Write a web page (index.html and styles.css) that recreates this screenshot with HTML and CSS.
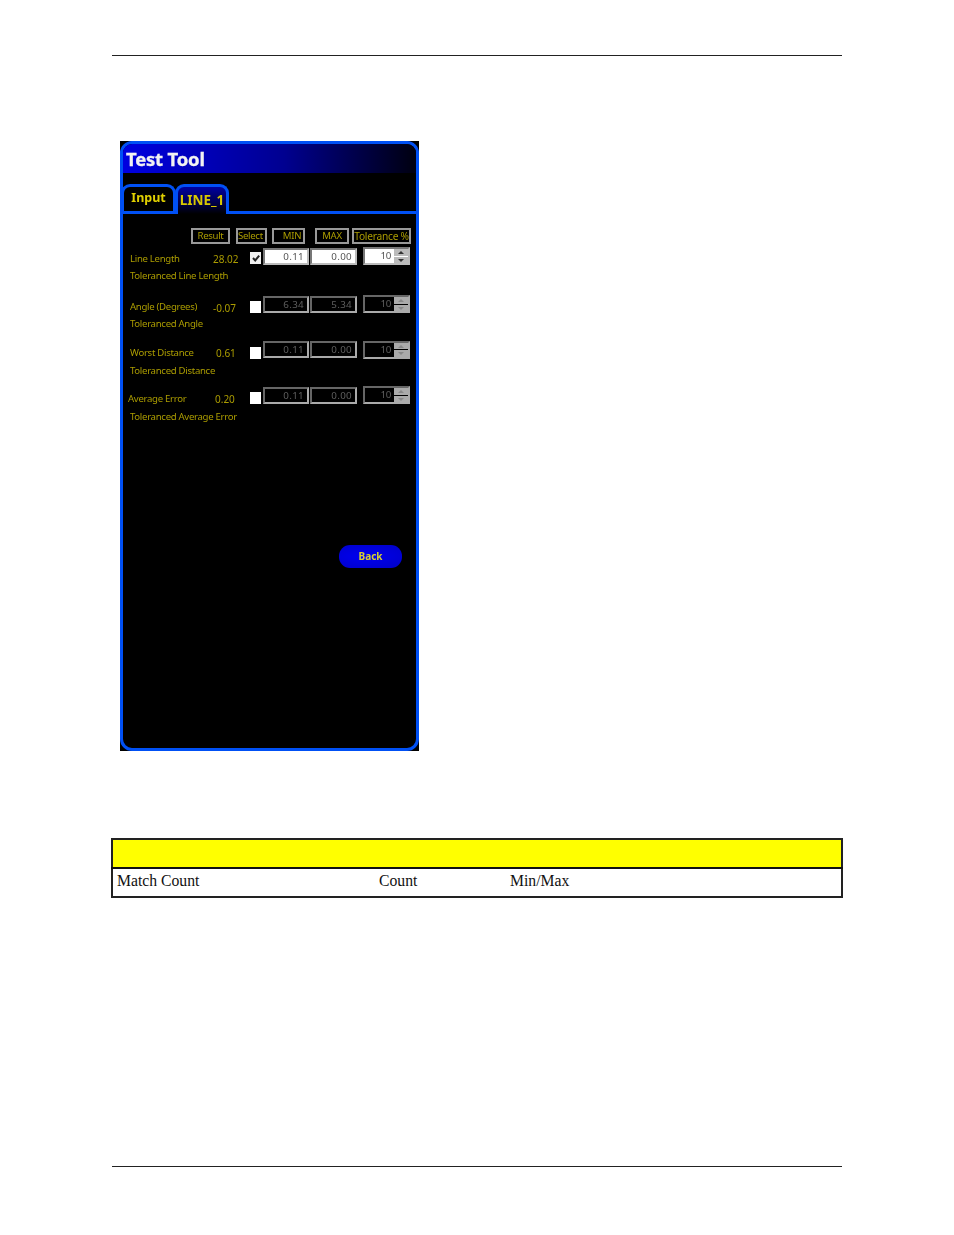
FILE: index.html
```html
<!DOCTYPE html>
<html lang="en">
<head>
<meta charset="utf-8">
<title>Test Tool</title>
<link rel="stylesheet" href="styles.css">
</head>
<body>
<div class="page">
  <hr class="rule">
  <div class="shot">
    <div class="window">
      <div class="titlebar">Test Tool</div>
      <div class="tabs">
        <div class="tab tab-input">Input</div>
        <div class="tab tab-active">LINE_1</div>
      </div>
      <div class="panel">
        <div class="heads">
          <span class="hd hd-result">Result</span>
          <span class="hd hd-select">Select</span>
          <span class="hd hd-min">MIN</span>
          <span class="hd hd-max">MAX</span>
          <span class="hd hd-tol">Tolerance %</span>
        </div>

        <div class="group g1">
          <div class="row">
            <span class="name">Line Length</span>
            <span class="val v1">28.02</span>
            <span class="check on"><svg viewBox="0 0 10 10" width="10" height="10"><path d="M2 5l2.2 2.4L8.2 2.6" fill="none" stroke="#222" stroke-width="2"/></svg></span>
            <span class="field">0.11</span>
            <span class="field f2">0.00</span>
            <span class="spin"><span class="num">10</span><span class="arrows"><i class="up"></i><i class="down"></i></span></span>
          </div>
          <div class="sub">Toleranced Line Length</div>
        </div>

        <div class="group g2 off">
          <div class="row">
            <span class="name">Angle (Degrees)</span>
            <span class="val v2">-0.07</span>
            <span class="check"></span>
            <span class="field">6.34</span>
            <span class="field f2">5.34</span>
            <span class="spin"><span class="num">10</span><span class="arrows"><i class="up"></i><i class="down"></i></span></span>
          </div>
          <div class="sub">Toleranced Angle</div>
        </div>

        <div class="group g3 off">
          <div class="row">
            <span class="name">Worst Distance</span>
            <span class="val v3">0.61</span>
            <span class="check"></span>
            <span class="field">0.11</span>
            <span class="field f2">0.00</span>
            <span class="spin"><span class="num">10</span><span class="arrows"><i class="up"></i><i class="down"></i></span></span>
          </div>
          <div class="sub">Toleranced Distance</div>
        </div>

        <div class="group g4 off">
          <div class="row">
            <span class="name name-out">Average Error</span>
            <span class="val v4">0.20</span>
            <span class="check"></span>
            <span class="field">0.11</span>
            <span class="field f2">0.00</span>
            <span class="spin"><span class="num">10</span><span class="arrows"><i class="up"></i><i class="down"></i></span></span>
          </div>
          <div class="sub">Toleranced Average Error</div>
        </div>

        <div class="actions"><span class="back">Back</span></div>
      </div>
    </div>
  </div>

  <table class="spec">
    <tr><td class="band" colspan="3"></td></tr>
    <tr>
      <td class="c1">Match Count</td>
      <td class="c2">Count</td>
      <td class="c3">Min/Max</td>
    </tr>
  </table>

  <hr class="rule foot">
</div>
</body>
</html>
```
FILE: styles.css
```css
* { box-sizing: border-box; }
html, body { margin: 0; padding: 0; background: #fff; }
.page {
  height: 1235px;
  padding: 55px 112px 0;
  display: flex;
  flex-direction: column;
}
.rule { margin: 0; border: 0; height: 1px; background: #222; flex: none; }
.foot { margin-top: 268px; }

.shot { margin: 85px 0 0 8px; width: 299px; height: 610px; background: #000; flex: none; }
.window {
  width: 299px;
  height: 610px;
  background: #000;
  border: 3px solid #0050f5;
  border-radius: 12px;
  overflow: hidden;
  font-family: "Noto Sans", sans-serif;
  color: #ab9c00;
  filter: blur(0.5px);
}
.titlebar {
  height: 29px;
  padding: 1px 0 0 3px;
  background: linear-gradient(90deg, #0000e0 0%, #000090 55%, #000010 100%);
  color: #f2f2f2;
  font-weight: 700;
  font-size: 18.5px;
  line-height: 27px;
  letter-spacing: -0.2px;
  -webkit-text-stroke: 0.3px #f2f2f2;
}
.tabs {
  height: 41px;
  padding: 11px 0 0 0;
  margin-left: -2px;
  display: flex;
  align-items: flex-end;
  border-bottom: 3px solid #0050f5;
}
.tab {
  border: 3px solid #0050f5;
  border-bottom: 0;
  border-radius: 9px 9px 0 0;
  font-weight: 700;
  color: #d8c800;
  text-align: center;
  flex: none;
}
.tab-input {
  width: 55px;
  height: 27px;
  background: #000;
  font-size: 12.5px;
  line-height: 21px;
  color: #e0d000;
}
.tab-active {
  width: 54px;
  height: 30px;
  background: linear-gradient(180deg, #0000a0 0%, #000050 55%, #000 100%);
  font-size: 13.5px;
  line-height: 26px;
  position: relative;
  top: 3px;
  margin-left: -1px;
  z-index: 1;
}
.panel { font-size: 9.6px; letter-spacing: -0.3px; }
.heads { height: 17px; margin-top: 14px; display: flex; }
.hd {
  height: 16px;
  border: 2px solid #999;
  background: #000;
  color: #ab9c00;
  font-size: 9.6px;
  line-height: 12px;
  text-align: center;
  white-space: nowrap;
  overflow: hidden;
  flex: none;
}
.hd-result { margin-left: 68px; width: 39px; }
.hd-select { margin-left: 6px; width: 31px; text-align: left; }
.hd-min { margin-left: 5px; width: 33px; padding-left: 7px; }
.hd-max { margin-left: 10px; width: 34px; }
.hd-tol { margin-left: 3px; width: 59px; font-size: 10.2px; letter-spacing: -0.25px; }

.group { position: relative; }
.g1 { margin-top: 3px; }
.g2 { margin-top: 12px; }
.g3 { margin-top: 10.5px; }
.g4 { margin-top: 10px; }
.row { display: flex; align-items: center; height: 18px; white-space: nowrap; }
.name { width: 90px; padding-left: 7px; flex: none; margin-top: 2px; }
.name-out { padding-left: 5px; }
.val { font-size: 10px; flex: none; letter-spacing: 0; margin-top: 3px; width: 37px; }
.v2 { margin-top: 5px; }
.v3 { padding-left: 3px; }
.v4 { padding-left: 2px; }
.check {
  width: 11px;
  height: 12px;
  background: #fff;
  flex: none;
  display: flex;
  align-items: center;
  justify-content: center;
}
.check.on { background: #f0f0f0; }
.g1 .check { margin-top: 1px; }
.g2 .check { margin-top: 4px; }
.g3 .check { margin-top: 2px; }
.g4 .check { margin-top: 1px; }
.field {
  width: 46px;
  height: 17px;
  margin-left: 2px;
  border: 2px solid;
  border-color: #777 #bbb #bbb #777;
  background: #fff;
  color: #555;
  font-size: 9.8px;
  letter-spacing: 0.3px;
  line-height: 13px;
  text-align: right;
  padding-right: 3px;
  flex: none;
}
.f2 { margin-left: 1px; width: 47px; }
.spin {
  width: 47px;
  height: 18px;
  margin-left: 6px;
  border: 2px solid;
  border-color: #777 #bbb #bbb #777;
  background: #fff;
  color: #555;
  font-size: 9.8px;
  line-height: 14px;
  display: flex;
  flex: none;
}
.g1 .field, .g1 .spin, .g2 .field, .g2 .spin { margin-bottom: 2px; }
.g3 .field, .g3 .spin { margin-bottom: 4px; }
.g4 .field, .g4 .spin { margin-bottom: 5px; }
.num { flex: 1; text-align: right; padding-right: 3px; }
.arrows { width: 14px; display: flex; flex-direction: column; gap: 1px; flex: none; }
.arrows i { flex: 1; background: #bbb; display: block; position: relative; }
.arrows i::after {
  content: "";
  position: absolute;
  left: 4px;
  top: 2px;
  width: 0;
  height: 0;
  border-left: 3px solid transparent;
  border-right: 3px solid transparent;
}
.up::after { border-bottom: 3px solid #333; }
.down::after { border-top: 3px solid #333; }
.off .field, .off .spin { background: #000; color: #5e5e5e; border-color: #666 #aaa #aaa #666; }
.off .arrows i { background: #aaa; }
.off .up::after { border-bottom-color: #888; }
.off .down::after { border-top-color: #888; }
.sub { padding-left: 7px; margin-top: 2px; line-height: 16px; white-space: nowrap; }

.actions { display: flex; justify-content: flex-end; padding-right: 14px; margin-top: 120px; }
.back {
  width: 63px;
  height: 23px;
  border-radius: 11px;
  background: radial-gradient(ellipse at 40% 50%, #0000f0 0%, #0000c8 100%);
  color: #d8d030;
  font-size: 10px;
  font-weight: 700;
  line-height: 23px;
  text-align: center;
  letter-spacing: 0;
}

.spec {
  margin: 87px 0 0 -1px;
  width: 732px;
  height: 60px;
  border-collapse: collapse;
  border: 2px solid #222;
  font-family: "Liberation Serif", serif;
  font-size: 15.7px;
  color: #111;
  flex: none;
}
.spec td { padding: 0 0 3px; }
.spec .band { height: 29px; background: #ff0; border-bottom: 2px solid #111; padding: 0; }
.c1 { width: 263px; }
.spec .c1 { padding-left: 4px; }
.c2 { width: 131px; }
.spec .c2 { padding-left: 4px; }
.spec .c3 { padding-left: 4px; }
```
